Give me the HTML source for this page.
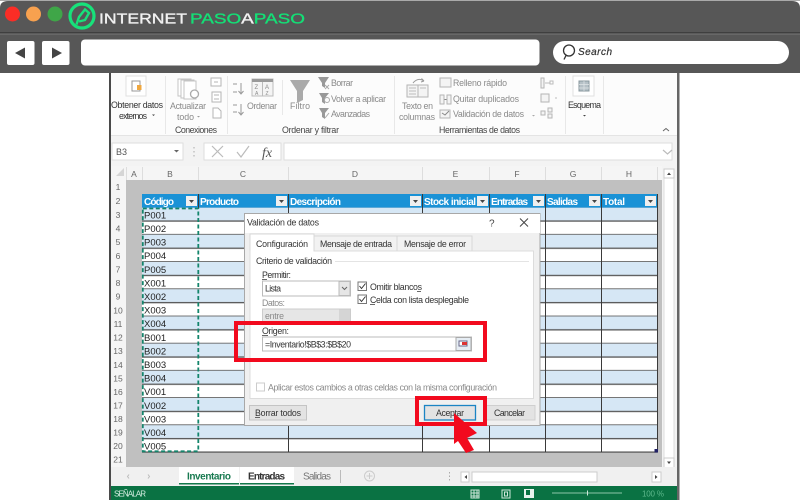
<!DOCTYPE html>
<html lang="es"><head><meta charset="utf-8"><title>Validación de datos</title>
<style>
html,body{margin:0;padding:0;background:#fff;width:800px;height:500px;overflow:hidden}
svg{display:block;filter:blur(.35px)}
text{font-family:"Liberation Sans",sans-serif;font-size:8.8px;fill:#444}
.g{fill:#8a8a8a}
.d{fill:#333}
.h{fill:#fff;font-weight:bold;font-size:10px}
.c{fill:#222;font-size:9.5px}
.n{fill:#666;font-size:8.5px;text-anchor:middle}
.dl{fill:#333;font-size:8.8px}
.ic{fill:#f4f4f4;stroke:#b5b5b5;stroke-width:1}
</style></head><body>
<svg width="800" height="500" viewBox="0 0 800 500" xmlns="http://www.w3.org/2000/svg">
<defs>
<pattern id="rows" x="0" y="207.6" width="10" height="27.2" patternUnits="userSpaceOnUse">
<rect width="10" height="13.6" fill="#d6e7f5"/>
<rect y="13.6" width="10" height="13.6" fill="#fff"/>
<rect y="12.8" width="10" height="1.3" fill="#555"/>
<rect y="26.4" width="10" height="1.3" fill="#555"/>
</pattern>
</defs>
<rect width="800" height="500" fill="#fff"/>
<!-- browser chrome -->
<path d="M0 73V8Q0 1 8 1H792Q800 1 800 8V73Z" fill="#575757"/>
<rect y="0" width="800" height="1" fill="#aaa"/>
<rect y="32" width="800" height="1.5" fill="#3f3f3f"/>
<rect y="33.5" width="800" height="1" fill="#777"/>
<circle cx="12.5" cy="14" r="7.5" fill="#fb2d26"/>
<circle cx="33.5" cy="14" r="7.5" fill="#f7a14f"/>
<circle cx="55" cy="14" r="7.5" fill="#3fa648"/>
<!-- logo -->
<circle cx="82" cy="16" r="12" fill="none" stroke="#17e27a" stroke-width="3.2"/>
<path d="M76.500 24.500L79 17L85 9.500L89 13L85 20L79 21.500" fill="none" stroke="#17e27a" stroke-width="2.400"/>
<text x="99" y="23.500" textLength="88" lengthAdjust="spacingAndGlyphs" style="font-size:14.800px;fill:#f1f1f1;stroke:#f1f1f1;stroke-width:.35">INTERNET</text>
<text x="190" y="23.500" textLength="115" lengthAdjust="spacingAndGlyphs" style="font-size:14.800px;fill:#14df76;stroke:#14df76;stroke-width:.35">PASO<tspan style="fill:#f1f1f1;stroke:#f1f1f1">A</tspan>PASO</text>
<!-- nav -->
<rect x="7" y="41" width="27.5" height="24" rx="2" fill="#fff"/>
<path d="M15 53L25 47.5V58.5Z" fill="#444"/>
<rect x="42" y="41" width="27.5" height="24" rx="2" fill="#fff"/>
<path d="M62 53L52 47.5V58.5Z" fill="#444"/>
<rect x="81" y="39.5" width="458.5" height="26" rx="4" fill="#fff"/>
<rect x="553" y="41" width="236" height="23" rx="11.5" fill="#fff"/>
<circle cx="569" cy="50.5" r="5.5" fill="none" stroke="#333" stroke-width="1.3"/>
<path d="M566 55.5L564 59.5" stroke="#333" stroke-width="1.3"/>
<text x="578" y="55" textLength="34" style="font-size:10px;fill:#333;font-style:italic;stroke:#333;stroke-width:.2">Search</text>

<!-- excel frame -->
<rect x="109" y="73" width="2" height="427" fill="#4a4a4a"/>
<rect x="677" y="73" width="2.5" height="427" fill="#666"/>
<rect x="111" y="73" width="566" height="62" fill="#fcfcfc"/>
<rect x="111" y="135" width="566" height="1" fill="#e4e4e4"/>
<!-- ribbon separators -->
<g fill="#e8e8e8"><rect x="165" y="76" width="1" height="58"/><rect x="227" y="76" width="1" height="58"/><rect x="394" y="76" width="1" height="58"/><rect x="565" y="76" width="1" height="58"/><rect x="603" y="76" width="1" height="58"/><rect x="282" y="80" width="1" height="35"/></g>
<!-- ribbon icons -->
<rect x="126" y="76" width="20" height="20" fill="#fff" stroke="#e0e0e0"/>
<rect x="132" y="81" width="8" height="10" fill="#fff" stroke="#999"/><rect x="137" y="85" width="4.5" height="5" fill="#efa73f"/>
<g fill="#fff" stroke="#c4c4c4"><rect x="178" y="79" width="13" height="17"/><rect x="181" y="80" width="13" height="18"/><rect x="184" y="81" width="12" height="18"/></g>
<circle cx="194.500" cy="94" r="4" fill="#fff" stroke="#aaa" stroke-width="1.3"/>
<g fill="#fff" stroke="#b5b5b5"><rect x="211" y="78" width="10" height="8"/><path d="M214 82h4" /><rect x="212" y="92" width="9" height="10"/><path d="M214 95h5M214 99h5"/><path d="M213 108h5l3 3v7h-8Z"/></g>
<g stroke="#999" fill="none"><path d="M233 84h4M233 92h4M241 83v10M238.5 91l2.5 3l2.5-3"/><path d="M233 105h4M233 112h4M241 104v10M238.5 112l2.5 3l2.5-3"/></g>
<rect x="252" y="79" width="21" height="17" fill="#f4f4f4" stroke="#bbb"/><rect x="252" y="79" width="21" height="3" fill="#999"/><path d="M262.5 82v14" stroke="#bbb"/>
<text x="254.500" y="89" class="g" style="font-size:6px">Z</text><text x="255" y="95" class="g" style="font-size:5px">A</text><text x="265" y="89" class="g" style="font-size:6px">A</text><text x="265.500" y="95" class="g" style="font-size:5px">Z</text>
<path d="M290 80H310L303 91V100L297 103V91Z" fill="#aaa"/>
<g fill="#999"><path d="M318 77H329L325 83V88L322 86V83Z"/><path d="M319 93H329L325 98V104L322 102V98Z"/><path d="M319 108H329L325 113V119L322 117V113Z"/></g>
<path d="M325 85l4 4M329 85l-4 4" stroke="#aaa"/><circle cx="327" cy="100" r="2.500" fill="none" stroke="#aaa"/><path d="M325 118l4-5" stroke="#aaa"/>
<g class="ic"><rect x="407" y="85" width="11" height="12"/><rect x="418" y="85" width="10" height="12"/></g>
<path d="M409 88h7M409 91h7M409 94h7M420 88h6" stroke="#bbb"/>
<path d="M413 83Q418 77 424 81M424 81l-2.500-2.500M424 81l-3 1" fill="none" stroke="#999"/>
<g class="ic"><rect x="440" y="78" width="11" height="9"/><rect x="440" y="95" width="4" height="9"/><rect x="447" y="95" width="4" height="9"/><rect x="440" y="110" width="10" height="8"/></g>
<path d="M444.500 99.500h2M442 113l3 2l4-4" fill="none" stroke="#888"/>
<g class="ic"><rect x="541" y="78" width="3" height="10"/><rect x="541" y="94" width="8" height="8"/><rect x="541" y="111" width="4" height="4"/><rect x="548" y="108" width="4" height="4"/><rect x="548" y="114" width="4" height="4"/></g>
<path d="M545 83h5" stroke="#bbb"/><rect x="550" y="81" width="3" height="3" fill="#fff" stroke="#bbb"/><path d="M555 98h2" stroke="#bbb"/>
<rect x="573" y="76" width="21" height="20" fill="#fff" stroke="#e0e0e0"/><rect x="579" y="81" width="10" height="10" fill="#b5c0c6" stroke="#88979e"/><path d="M584 81v10M579 84.500h10M579 88h10" stroke="#dfe5e8" stroke-width=".7"/>
<!-- ribbon labels -->
<text x="111" y="108" class="d" textLength="52">Obtener datos</text>
<text x="119" y="119" class="d" textLength="28">externos</text><path d="M152 114.500h3l-1.500 1.500Z" fill="#444"/>
<text x="170" y="109" class="g" textLength="36">Actualizar</text>
<text x="177" y="120" class="g" textLength="17">todo</text><path d="M197 116h3l-1.500 1.500Z" fill="#999"/>
<text x="175" y="133" textLength="42">Conexiones</text>
<text x="247" y="109" class="g" textLength="30">Ordenar</text>
<text x="290" y="109" class="g" textLength="20">Filtro</text>
<text x="331" y="86" class="g" textLength="22">Borrar</text>
<text x="331" y="102" class="g" textLength="55">Volver a aplicar</text>
<text x="331" y="117" class="g" textLength="39">Avanzadas</text>
<text x="282" y="133" textLength="57">Ordenar y filtrar</text>
<text x="402" y="109" class="g" textLength="31">Texto en</text>
<text x="399" y="120" class="g" textLength="36">columnas</text>
<text x="453" y="86" class="g" textLength="54">Relleno rápido</text>
<text x="453" y="102" class="g" textLength="66">Quitar duplicados</text>
<text x="453" y="117" class="g" textLength="71">Validación de datos</text>
<path d="M532 115h3l-1.500 1.500Z" fill="#aaa"/>
<text x="439" y="133" textLength="81">Herramientas de datos</text>
<text x="568" y="108" class="d" textLength="33">Esquema</text><path d="M583 115h3l-1.500 1.500Z" fill="#444"/>
<path d="M663 131l3-2.500l3 2.500" fill="none" stroke="#666"/>

<!-- formula bar -->
<rect x="111" y="136" width="566" height="30" fill="#f3f3f3"/>
<rect x="112" y="143" width="71" height="17" fill="#fff" stroke="#ddd"/>
<text x="116" y="155" style="font-size:9px;fill:#555">B3</text>
<path d="M174 150h5l-2.500 2.500Z" fill="#666"/>
<g fill="#aaa"><rect x="193.5" y="147" width="1" height="1.5"/><rect x="193.5" y="151" width="1" height="1.5"/><rect x="193.5" y="155" width="1" height="1.5"/></g>
<rect x="204" y="143" width="77" height="17" fill="#fff" stroke="#ddd"/>
<path d="M212 146L223 157M223 146L212 157" stroke="#bbb" stroke-width="1.2"/>
<path d="M237 152L241 157L249 146" fill="none" stroke="#bbb" stroke-width="1.2"/>
<text x="262" y="157" style='font-family:"Liberation Serif",serif;font-size:14px;font-style:italic;fill:#555'>fx</text>
<rect x="284" y="143" width="388" height="17" fill="#fff" stroke="#ddd"/>
<path d="M663 150l4.500 4l4.500-4" fill="none" stroke="#bbb" stroke-width="1.2"/>

<!-- column headers -->
<rect x="111" y="166" width="551" height="14" fill="#f5f5f5"/>
<path d="M116 176L124 168V176Z" fill="#d5d5d5"/>
<g fill="#ddd"><rect x="126" y="167" width="1" height="13"/><rect x="142" y="167" width="1" height="13"/><rect x="198" y="167" width="1" height="13"/><rect x="288" y="167" width="1" height="13"/><rect x="422" y="167" width="1" height="13"/><rect x="489" y="167" width="1" height="13"/><rect x="545" y="167" width="1" height="13"/><rect x="601" y="167" width="1" height="13"/><rect x="657" y="167" width="1" height="13"/></g>
<text class="n" x="134" y="177">A</text><text class="n" x="170" y="177">B</text><text class="n" x="243" y="177">C</text><text class="n" x="355" y="177">D</text><text class="n" x="455.5" y="177">E</text><text class="n" x="517" y="177">F</text><text class="n" x="573" y="177">G</text><text class="n" x="629" y="177">H</text>
<!-- row numbers -->
<rect x="111" y="180" width="15" height="287" fill="#f5f5f5"/>
<g>
<text class="n" x="118" y="190">1</text><text class="n" x="118" y="204">2</text><text class="n" x="118" y="218">3</text><text class="n" x="118" y="231.5">4</text><text class="n" x="118" y="245">5</text><text class="n" x="118" y="259">6</text><text class="n" x="118" y="272.5">7</text><text class="n" x="118" y="286">8</text><text class="n" x="118" y="299.5">9</text><text class="n" x="118" y="313.5">10</text><text class="n" x="118" y="327">11</text><text class="n" x="118" y="340.5">12</text><text class="n" x="118" y="354">13</text><text class="n" x="118" y="368">14</text><text class="n" x="118" y="381.5">15</text><text class="n" x="118" y="395">16</text><text class="n" x="118" y="408.5">17</text><text class="n" x="118" y="422">18</text><text class="n" x="118" y="435.5">19</text><text class="n" x="118" y="449">20</text><text class="n" x="118" y="462.5">21</text>
</g>
<!-- sheet -->
<rect x="126" y="180" width="536" height="287" fill="#c0c0c0"/>
<rect x="142" y="194" width="515.5" height="14" fill="#1a92d6"/>
<rect x="142" y="207.6" width="515.5" height="244.8" fill="url(#rows)"/>
<rect x="142" y="451.5" width="515.5" height="1.2" fill="#555"/>
<g fill="#3a3a3a"><rect x="288" y="194" width="1" height="258"/><rect x="422" y="194" width="1" height="258"/><rect x="489" y="194" width="1" height="258"/><rect x="545" y="194" width="1" height="258"/><rect x="601" y="194" width="1" height="258"/><rect x="657" y="194" width="1" height="258"/><rect x="198" y="194" width="1" height="14"/></g>
<text class="h" x="144" y="205" textLength="30">Código</text>
<text class="h" x="200" y="205" textLength="39">Producto</text>
<text class="h" x="290" y="205" textLength="51">Descripción</text>
<text class="h" x="424" y="205" textLength="52">Stock inicial</text>
<text class="h" x="491" y="205" textLength="37">Entradas</text>
<text class="h" x="547" y="205" textLength="31">Salidas</text>
<text class="h" x="603" y="205" textLength="22">Total</text>
<g fill="#efefef"><rect x="186" y="196" width="11" height="10"/><rect x="276" y="196" width="11" height="10"/><rect x="410" y="196" width="11" height="10"/><rect x="477" y="196" width="11" height="10"/><rect x="533" y="196" width="11" height="10"/><rect x="589" y="196" width="11" height="10"/><rect x="645" y="196" width="11" height="10"/></g>
<g fill="#444"><path d="M189 200h5l-2.5 3Z"/><path d="M279 200h5l-2.5 3Z"/><path d="M413 200h5l-2.5 3Z"/><path d="M480 200h5l-2.5 3Z"/><path d="M536 200h5l-2.5 3Z"/><path d="M592 200h5l-2.5 3Z"/><path d="M648 200h5l-2.5 3Z"/></g>
<rect x="654.5" y="449" width="3.5" height="3.5" fill="#226"/>
<g>
<text class="c" x="144" y="218.5">P001</text><text class="c" x="144" y="232">P002</text><text class="c" x="144" y="245.5">P003</text><text class="c" x="144" y="259">P004</text><text class="c" x="144" y="273">P005</text><text class="c" x="144" y="286.5">X001</text><text class="c" x="144" y="300">X002</text><text class="c" x="144" y="313.5">X003</text><text class="c" x="144" y="327">X004</text><text class="c" x="144" y="341">B001</text><text class="c" x="144" y="354.5">B002</text><text class="c" x="144" y="368">B003</text><text class="c" x="144" y="381.5">B004</text><text class="c" x="144" y="395">V001</text><text class="c" x="144" y="409">V002</text><text class="c" x="144" y="422.5">V003</text><text class="c" x="144" y="436">V004</text><text class="c" x="144" y="449.5">V005</text>
</g>
<rect x="142.8" y="208.5" width="55.5" height="242.8" fill="none" stroke="#14856c" stroke-width="1.8" stroke-dasharray="4 2.5"/>

<!-- vertical scrollbar -->
<rect x="662" y="166" width="15" height="320" fill="#f3f3f3"/>
<rect x="664" y="169" width="10" height="299" fill="#fff" stroke="#ddd"/>
<rect x="664" y="169" width="10" height="9" fill="#fff" stroke="#ccc"/><path d="M667 175h4l-2-2.5Z" fill="#444"/>
<rect x="664" y="458" width="10" height="10" fill="#fff" stroke="#ccc"/><path d="M667 461.5h4l-2 2.5Z" fill="#444"/>

<!-- tab bar -->
<rect x="111" y="467" width="566" height="19" fill="#f0f0f0"/>
<path d="M129 474.5l-1.5 2l1.5 2M148 474.5l1.5 2l-1.5 2" fill="none" stroke="#bbb"/>
<rect x="179" y="467" width="60" height="17.5" fill="#fff"/>
<rect x="179" y="483" width="60" height="1.5" fill="#12784a"/>
<text x="187" y="479.5" textLength="44" style="font-size:10px;font-weight:bold;fill:#187a50">Inventario</text>
<rect x="240" y="467" width="54" height="17.5" fill="#fff"/>
<rect x="240" y="483" width="54" height="1.5" fill="#12784a"/>
<text x="248" y="479.5" textLength="37" style="font-size:10px;font-weight:bold;fill:#333">Entradas</text>
<text x="303" y="479.5" textLength="28" style="font-size:10px;fill:#777">Salidas</text>
<rect x="340" y="470" width="1" height="13" fill="#bbb"/>
<circle cx="369.5" cy="476" r="5" fill="none" stroke="#ccc" stroke-width="1"/><path d="M366.5 476h6M369.5 473v6" stroke="#ccc"/>
<g fill="#aaa"><rect x="449" y="472" width="1" height="1.5"/><rect x="449" y="475.5" width="1" height="1.5"/><rect x="449" y="479" width="1" height="1.5"/></g>
<rect x="461" y="472" width="8" height="10" fill="#fff" stroke="#ccc"/><path d="M467 475v4l-2.5-2Z" fill="#444"/>
<rect x="472" y="472" width="125" height="10" fill="#fff" stroke="#ccc"/>
<rect x="652" y="472" width="9" height="10" fill="#fff" stroke="#ccc"/><path d="M655 475v4l2.5-2Z" fill="#444"/>

<!-- status bar -->
<rect x="111" y="486" width="566" height="14" fill="#0a7243"/>
<text x="114" y="496.5" textLength="32" style="font-size:8px;fill:#d9f0e4">SEÑALAR</text>
<g fill="none" stroke="#cfe8da"><rect x="471" y="490" width="8" height="8"/><path d="M471 493h8M471 496h8M474 490v8M477 490v8"/><rect x="502" y="490" width="8" height="8"/><rect x="504.5" y="492" width="3" height="4"/></g>
<rect x="524" y="489" width="10" height="9" fill="#e8f3ed"/><rect x="526" y="490" width="4" height="5" fill="#0a7243"/>
<rect x="552" y="492.5" width="70" height="1" fill="#8cc6a8"/><rect x="587" y="490.5" width="1" height="5" fill="#cfe8da"/>
<text x="642" y="496.5" textLength="22" style="font-size:8px;fill:#5fb98d">100 %</text>

<!-- dialog -->
<rect x="244.5" y="213.5" width="295.5" height="212" fill="#f0f0f0" stroke="#a8a8a8"/>
<rect x="245" y="214" width="295" height="19" fill="#fff"/>
<text x="247" y="225.5" textLength="72" class="d">Validación de datos</text>
<text x="489" y="226.5" style="font-size:10px;fill:#444">?</text>
<path d="M520 218.5L528 226.5M528 218.5L520 226.5" stroke="#444" stroke-width="1"/>
<rect x="250" y="234" width="64" height="18" fill="#fff" stroke="#d8d8d8"/>
<text x="256" y="247" class="dl" textLength="52">Configuración</text>
<rect x="314" y="236" width="83" height="15" fill="#f2f2f2" stroke="#d8d8d8"/>
<text x="320" y="247" class="dl" textLength="72">Mensaje de entrada</text>
<rect x="397" y="236" width="75" height="15" fill="#f2f2f2" stroke="#d8d8d8"/>
<text x="404" y="247" class="dl" textLength="62">Mensaje de error</text>
<rect x="250" y="251" width="283.5" height="147.5" fill="#fff" stroke="#dcdcdc"/>
<rect x="250.5" y="250" width="63" height="3" fill="#fff"/>
<text x="256" y="264" class="dl" textLength="76">Criterio de validación</text>
<rect x="335" y="261" width="194" height="1" fill="#e4e4e4"/>
<text x="262" y="278" class="dl" textLength="29">Permitir:</text><rect x="262" y="279.2" width="5" height=".8" fill="#444"/>
<rect x="262.5" y="281" width="88" height="15" fill="#fff" stroke="#bbb"/>
<text x="265" y="291.5" class="d" textLength="16">Lista</text>
<rect x="339" y="281.5" width="11" height="14" fill="#e6e6e6" stroke="#bbb"/>
<path d="M342 287l2.5 2.5l2.5-2.5" fill="none" stroke="#666"/>
<text x="262" y="306" class="g" textLength="23">Datos:</text>
<rect x="262.5" y="309" width="88" height="13" fill="#e6e6e6" stroke="#ccc"/>
<text x="265" y="319" class="g" textLength="19">entre</text>
<rect x="339" y="309.5" width="11" height="12" fill="#d5d5d5"/>
<g fill="#fff" stroke="#777"><rect x="358" y="282" width="8.5" height="8.5"/><rect x="358" y="295" width="8.5" height="8.5"/></g>
<path d="M359.5 286l2 2.5l4-5M359.5 299l2 2.500l4-5" fill="none" stroke="#333"/>
<text x="370" y="290" class="dl" textLength="52">Omitir blancos</text><rect x="417" y="291" width="4" height=".8" fill="#444"/>
<text x="370" y="303" class="dl" textLength="99">Celda con lista desplegable</text><rect x="370" y="304" width="5" height=".8" fill="#444"/>
<text x="262" y="334" class="dl" textLength="27">Origen:</text><rect x="262" y="335.2" width="6" height=".8" fill="#444"/>
<rect x="262.5" y="337" width="209" height="14" fill="#fff" stroke="#bbb"/>
<text x="265" y="347.5" class="d" textLength="86">=Inventario!$B$3:$B$20</text>
<rect x="456" y="337.5" width="15" height="13" fill="#e6edf4" stroke="#aaa"/>
<rect x="459" y="341" width="8" height="5" fill="#fff" stroke="#668"/><rect x="462" y="342" width="5" height="3" fill="#d33"/>
<rect x="256.5" y="383" width="8" height="8" fill="#fff" stroke="#ccc"/>
<text x="268" y="390.5" class="g" textLength="229">Aplicar estos cambios a otras celdas con la misma configuración</text>
<rect x="249.5" y="405.5" width="57" height="14.5" fill="#e3e3e3" stroke="#c4c4c4"/>
<text x="255" y="416" class="d" textLength="46">Borrar todos</text><rect x="255" y="417" width="5" height=".8" fill="#444"/>
<rect x="424.5" y="405.5" width="51" height="14.5" fill="#e3e3e3" stroke="#1b84c4" stroke-width="1.3"/>
<text x="436" y="416" class="d" textLength="28">Aceptar</text>
<rect x="484.5" y="405.5" width="50.5" height="14.5" fill="#e3e3e3" stroke="#cfcfcf"/>
<text x="494" y="416" class="d" textLength="31">Cancelar</text>

<!-- red highlights -->
<rect x="236" y="323" width="249" height="37" fill="none" stroke="#f20a1e" stroke-width="4"/>
<rect x="417" y="398" width="68" height="26" fill="none" stroke="#f20a1e" stroke-width="4"/>
<path d="M454 413L477 433L467 438L474 450L466 453L458 441L454 444Z" fill="#f20a1e"/>
</svg>
</body></html>
